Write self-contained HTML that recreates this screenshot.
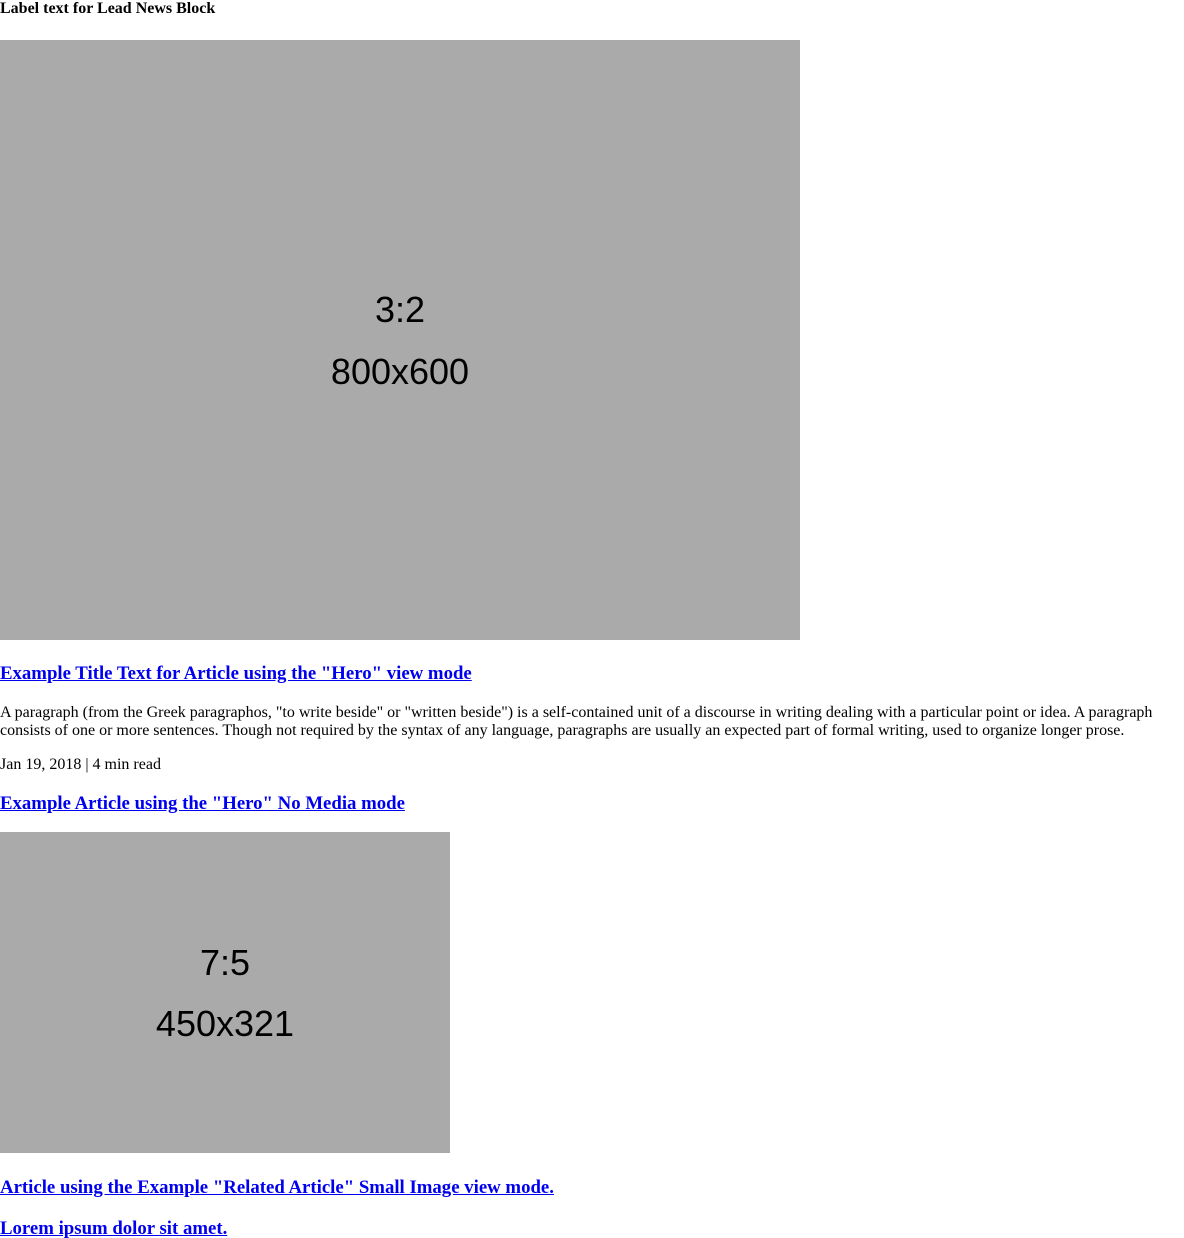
<!DOCTYPE html>
<html><head><meta charset="utf-8"><style>
html,body{margin:0;padding:0;background:#fff;width:1184px;height:1238px;overflow:hidden;position:relative}
body{font-family:"Liberation Serif",serif;font-size:16px;color:#000}
.a{position:absolute;left:0;margin:0}
.h{font-size:18.8px;font-weight:bold;line-height:22px;color:#0000ee;text-decoration:underline}
.img{background:#aaa;font-family:"Liberation Sans",sans-serif;font-size:36px;text-align:center;color:#000}
.img span{position:absolute;left:0;right:0;line-height:40px}
</style></head><body>
<div class="a" style="top:0;font-weight:bold;line-height:18px">Label text for Lead News Block</div>
<div class="a img" style="top:40px;width:800px;height:600px"><span style="top:250px">3:2</span><span style="top:312px">800x600</span></div>
<div class="a h" style="top:663px">Example Title Text for Article using the "Hero" view mode</div>
<div class="a" style="top:704px;line-height:18px;width:1184px">A paragraph (from the Greek paragraphos, "to write beside" or "written beside") is a self-contained unit of a discourse in writing dealing with a particular point or idea. A paragraph consists of one or more sentences. Though not required by the syntax of any language, paragraphs are usually an expected part of formal writing, used to organize longer prose.</div>
<div class="a" style="top:756px;line-height:18px">Jan 19, 2018 | 4 min read</div>
<div class="a h" style="top:793px">Example Article using the "Hero" No Media mode</div>
<div class="a img" style="top:832px;width:450px;height:321px"><span style="top:111px">7:5</span><span style="top:172px">450x321</span></div>
<div class="a h" style="top:1177px">Article using the Example "Related Article" Small Image view mode.</div>
<div class="a h" style="top:1218px">Lorem ipsum dolor sit amet.</div>
</body></html>
